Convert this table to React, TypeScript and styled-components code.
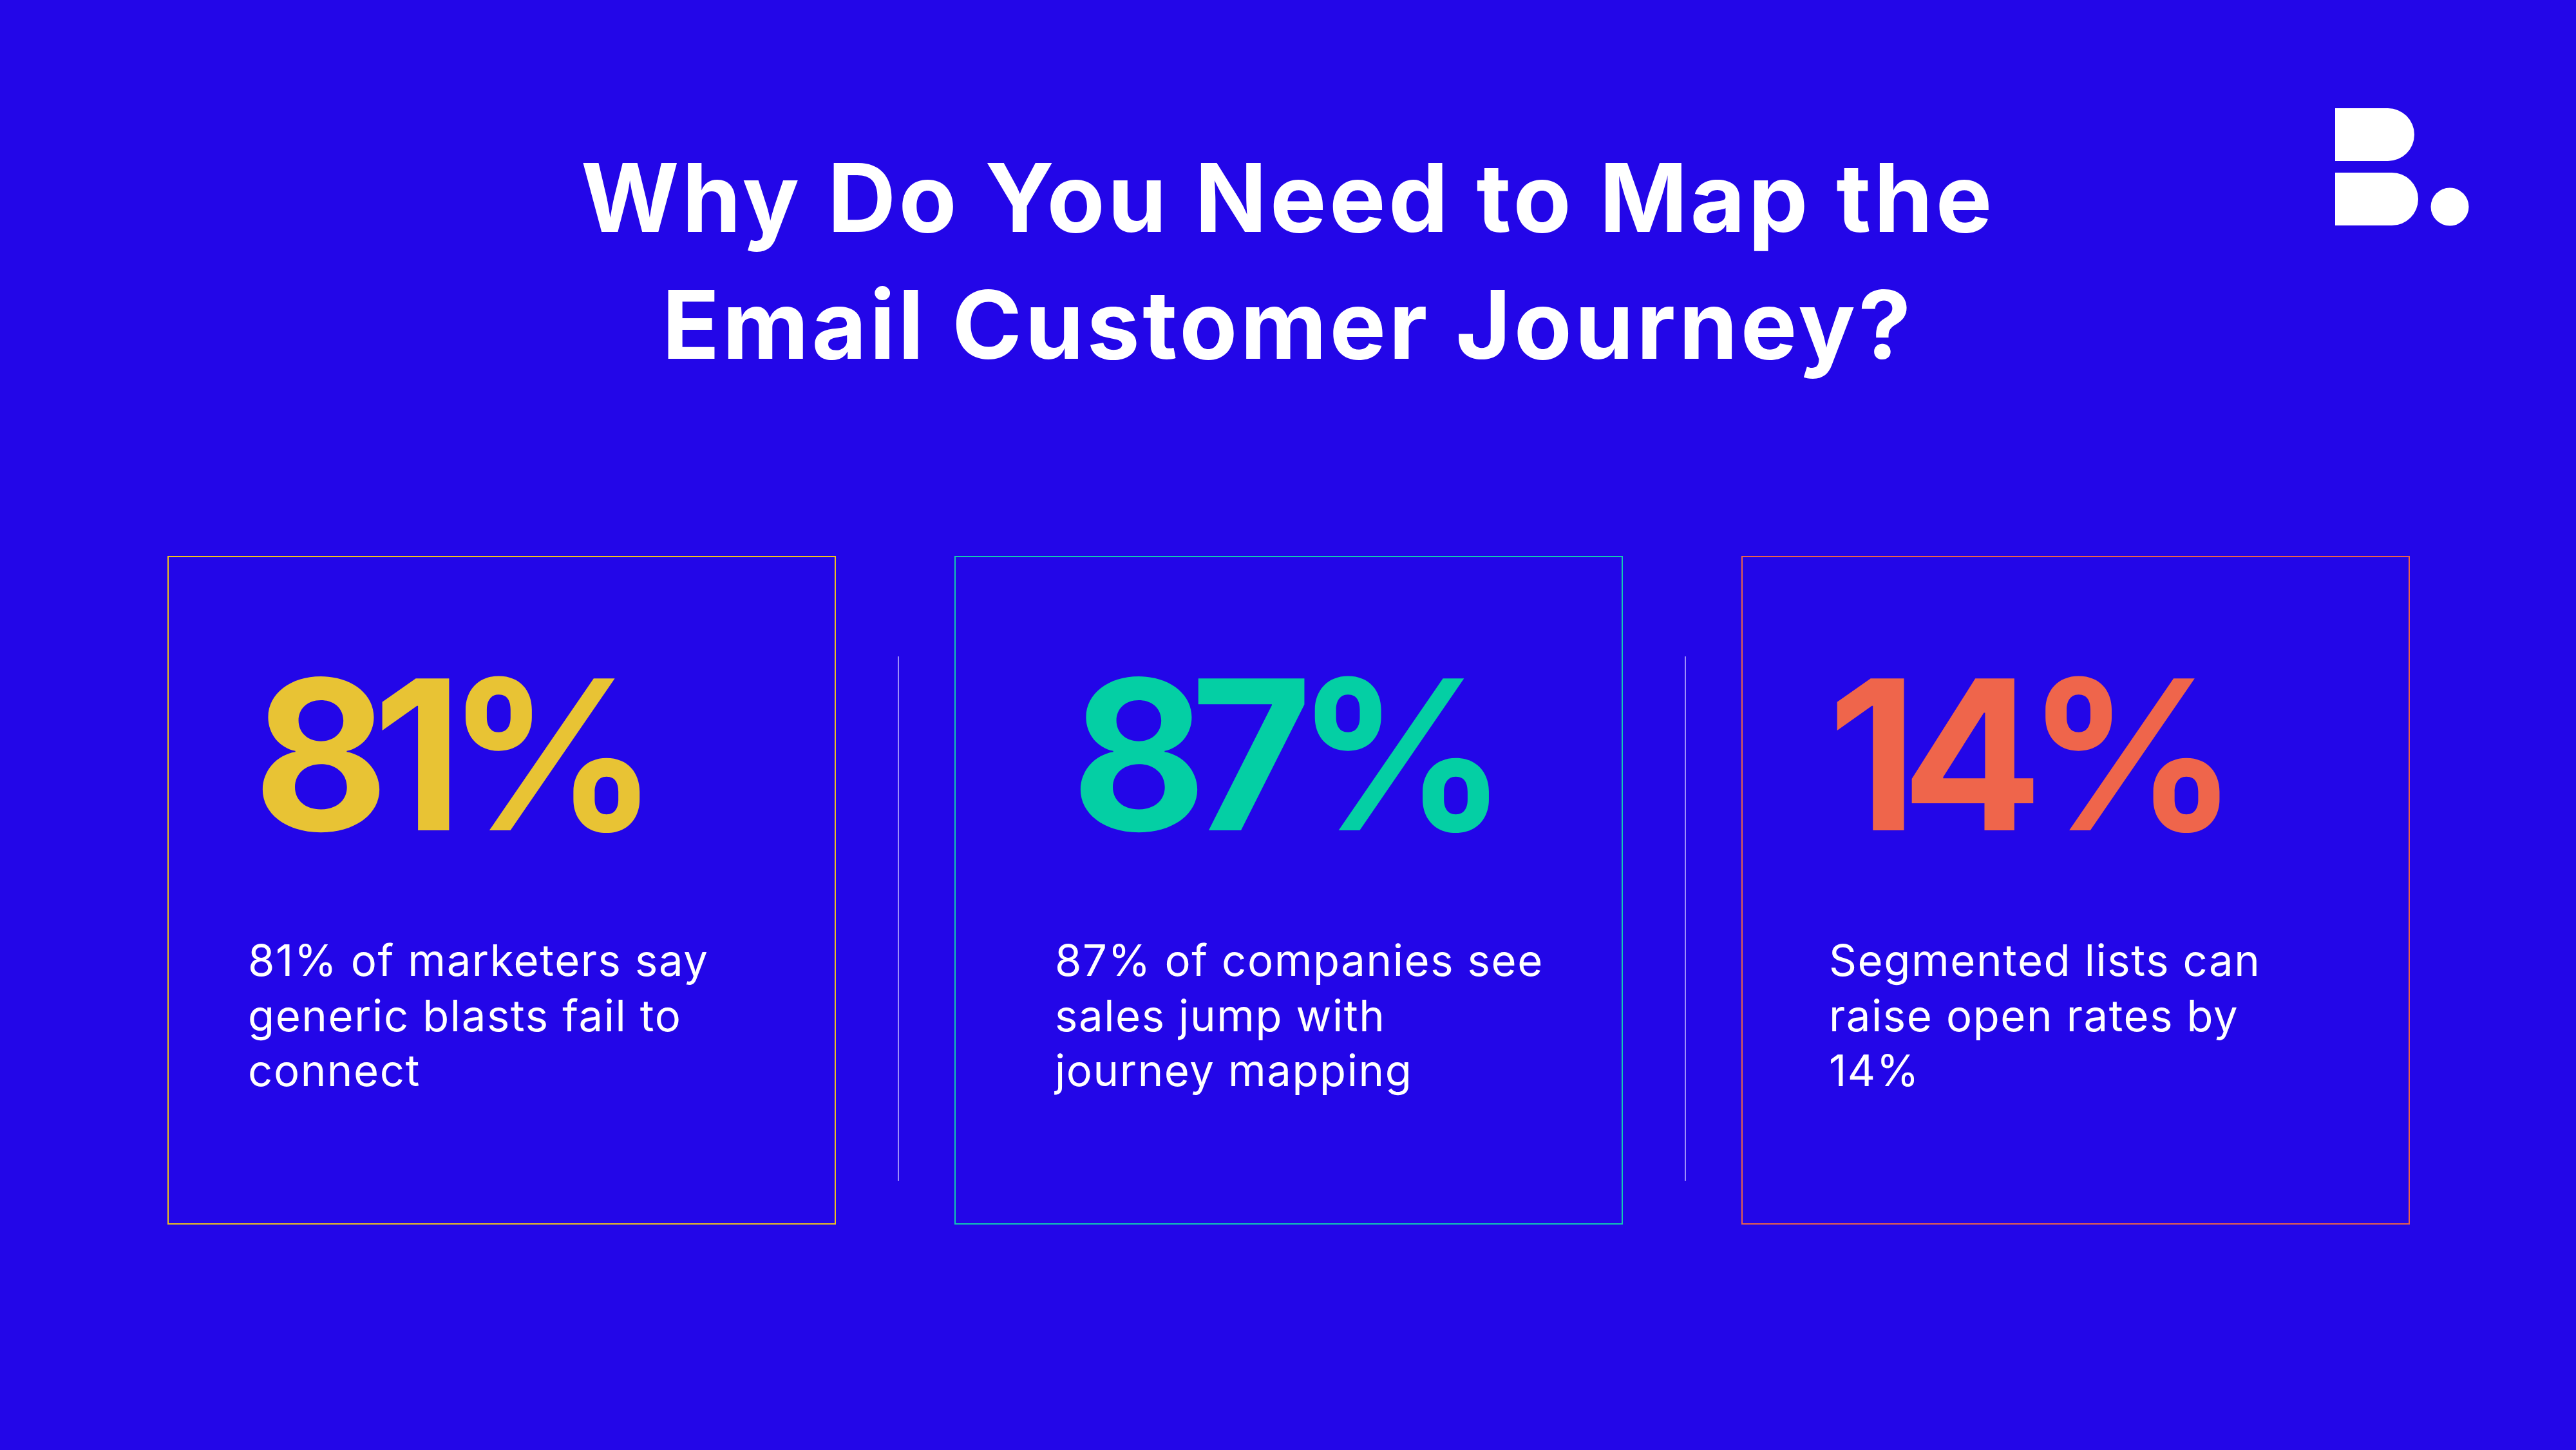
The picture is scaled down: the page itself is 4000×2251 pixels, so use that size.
import React from 'react';
import styled, { createGlobalStyle } from 'styled-components';

const GlobalStyle = createGlobalStyle`
  html, body {
    margin: 0;
    padding: 0;
    background: #2306e8;
  }
  * {
    box-sizing: border-box;
  }
`;

const Page = styled.div`
  width: 4000px;
  height: 2251px;
  background: #2306e8;
  font-family: Inter, 'Noto Sans', sans-serif;
  color: #ffffff;
  overflow: hidden;
`;

const Header = styled.header`
  display: grid;
  grid-template-columns: 1fr auto 1fr;
  align-items: start;
  padding: 0 164px;
`;

const Title = styled.h1`
  grid-column: 2;
  margin: 208px 0 0;
  font-size: 147px;
  line-height: 197px;
  font-weight: 700;
  letter-spacing: 4.5px;
  text-align: center;
  white-space: nowrap;
`;

const LogoWrap = styled.div`
  grid-column: 3;
  justify-self: end;
  margin-top: 168px;
  line-height: 0;
`;

const Row = styled.section`
  display: flex;
  align-items: flex-start;
  padding: 0 0 0 260px;
  margin-top: 261px;
`;

const Card = styled.article<{ $border: string; $pad: number }>`
  width: 1038px;
  height: 1038px;
  border: 2px solid ${(p) => p.$border};
  padding: 144px 40px 0 ${(p) => p.$pad}px;
  display: flex;
  flex-direction: column;
`;

const Stat = styled.div<{ $color: string; $shift: number }>`
  color: ${(p) => p.$color};
  font-size: 324px;
  line-height: 1;
  font-weight: 700;
  letter-spacing: -25px;
  margin-left: ${(p) => p.$shift}px;
`;

const Desc = styled.p`
  margin: 115px 0 0;
  font-size: 67px;
  line-height: 85.5px;
  font-weight: 400;
  letter-spacing: 1.6px;
  color: #ffffff;
`;

const Divider = styled.div`
  width: 2px;
  height: 814px;
  margin: 156px 86px 0 96px;
  background: rgba(200, 190, 255, 0.75);
`;

const Logo = () => (
  <svg width="210" height="183" viewBox="0 0 210 183" aria-label="B.">
    <path d="M0 0 H82 A41 41 0 0 1 82 82 H0 Z" fill="#fff" />
    <path d="M0 100 H88 A41 41 0 0 1 88 182 H0 Z" fill="#fff" />
    <circle cx="178" cy="153" r="29.5" fill="#fff" />
  </svg>
);

const stats = [
  {
    value: '81%',
    color: '#e8c334',
    border: '#efc21c',
    pad: 123,
    shift: 8,
    lines: ['81% of marketers say', 'generic blasts fail to', 'connect'],
  },
  {
    value: '87%',
    color: '#04cfa4',
    border: '#12c8b2',
    pad: 154,
    shift: 25,
    lines: ['87% of companies see', 'sales jump with', 'journey mapping'],
  },
  {
    value: '14%',
    color: '#ef654b',
    border: '#ea6249',
    pad: 134,
    shift: -2,
    lines: ['Segmented lists can', 'raise open rates by', '14%'],
  },
];

const App = () => {
  return (
    <>
      <GlobalStyle />
      <Page>
        <Header>
          <Title>
            Why Do You Need to Map the
            <br />
            Email Customer Journey?
          </Title>
          <LogoWrap>
            <Logo />
          </LogoWrap>
        </Header>
        <Row>
          {stats.map((s, i) => (
            <React.Fragment key={s.value}>
              {i > 0 && <Divider />}
              <Card $border={s.border} $pad={s.pad}>
                <Stat $color={s.color} $shift={s.shift}>
                  {s.value}
                </Stat>
                <Desc>
                  {s.lines.map((l, j) => (
                    <React.Fragment key={j}>
                      {l}
                      {j < s.lines.length - 1 && <br />}
                    </React.Fragment>
                  ))}
                </Desc>
              </Card>
            </React.Fragment>
          ))}
        </Row>
      </Page>
    </>
  );
};

export default App;
